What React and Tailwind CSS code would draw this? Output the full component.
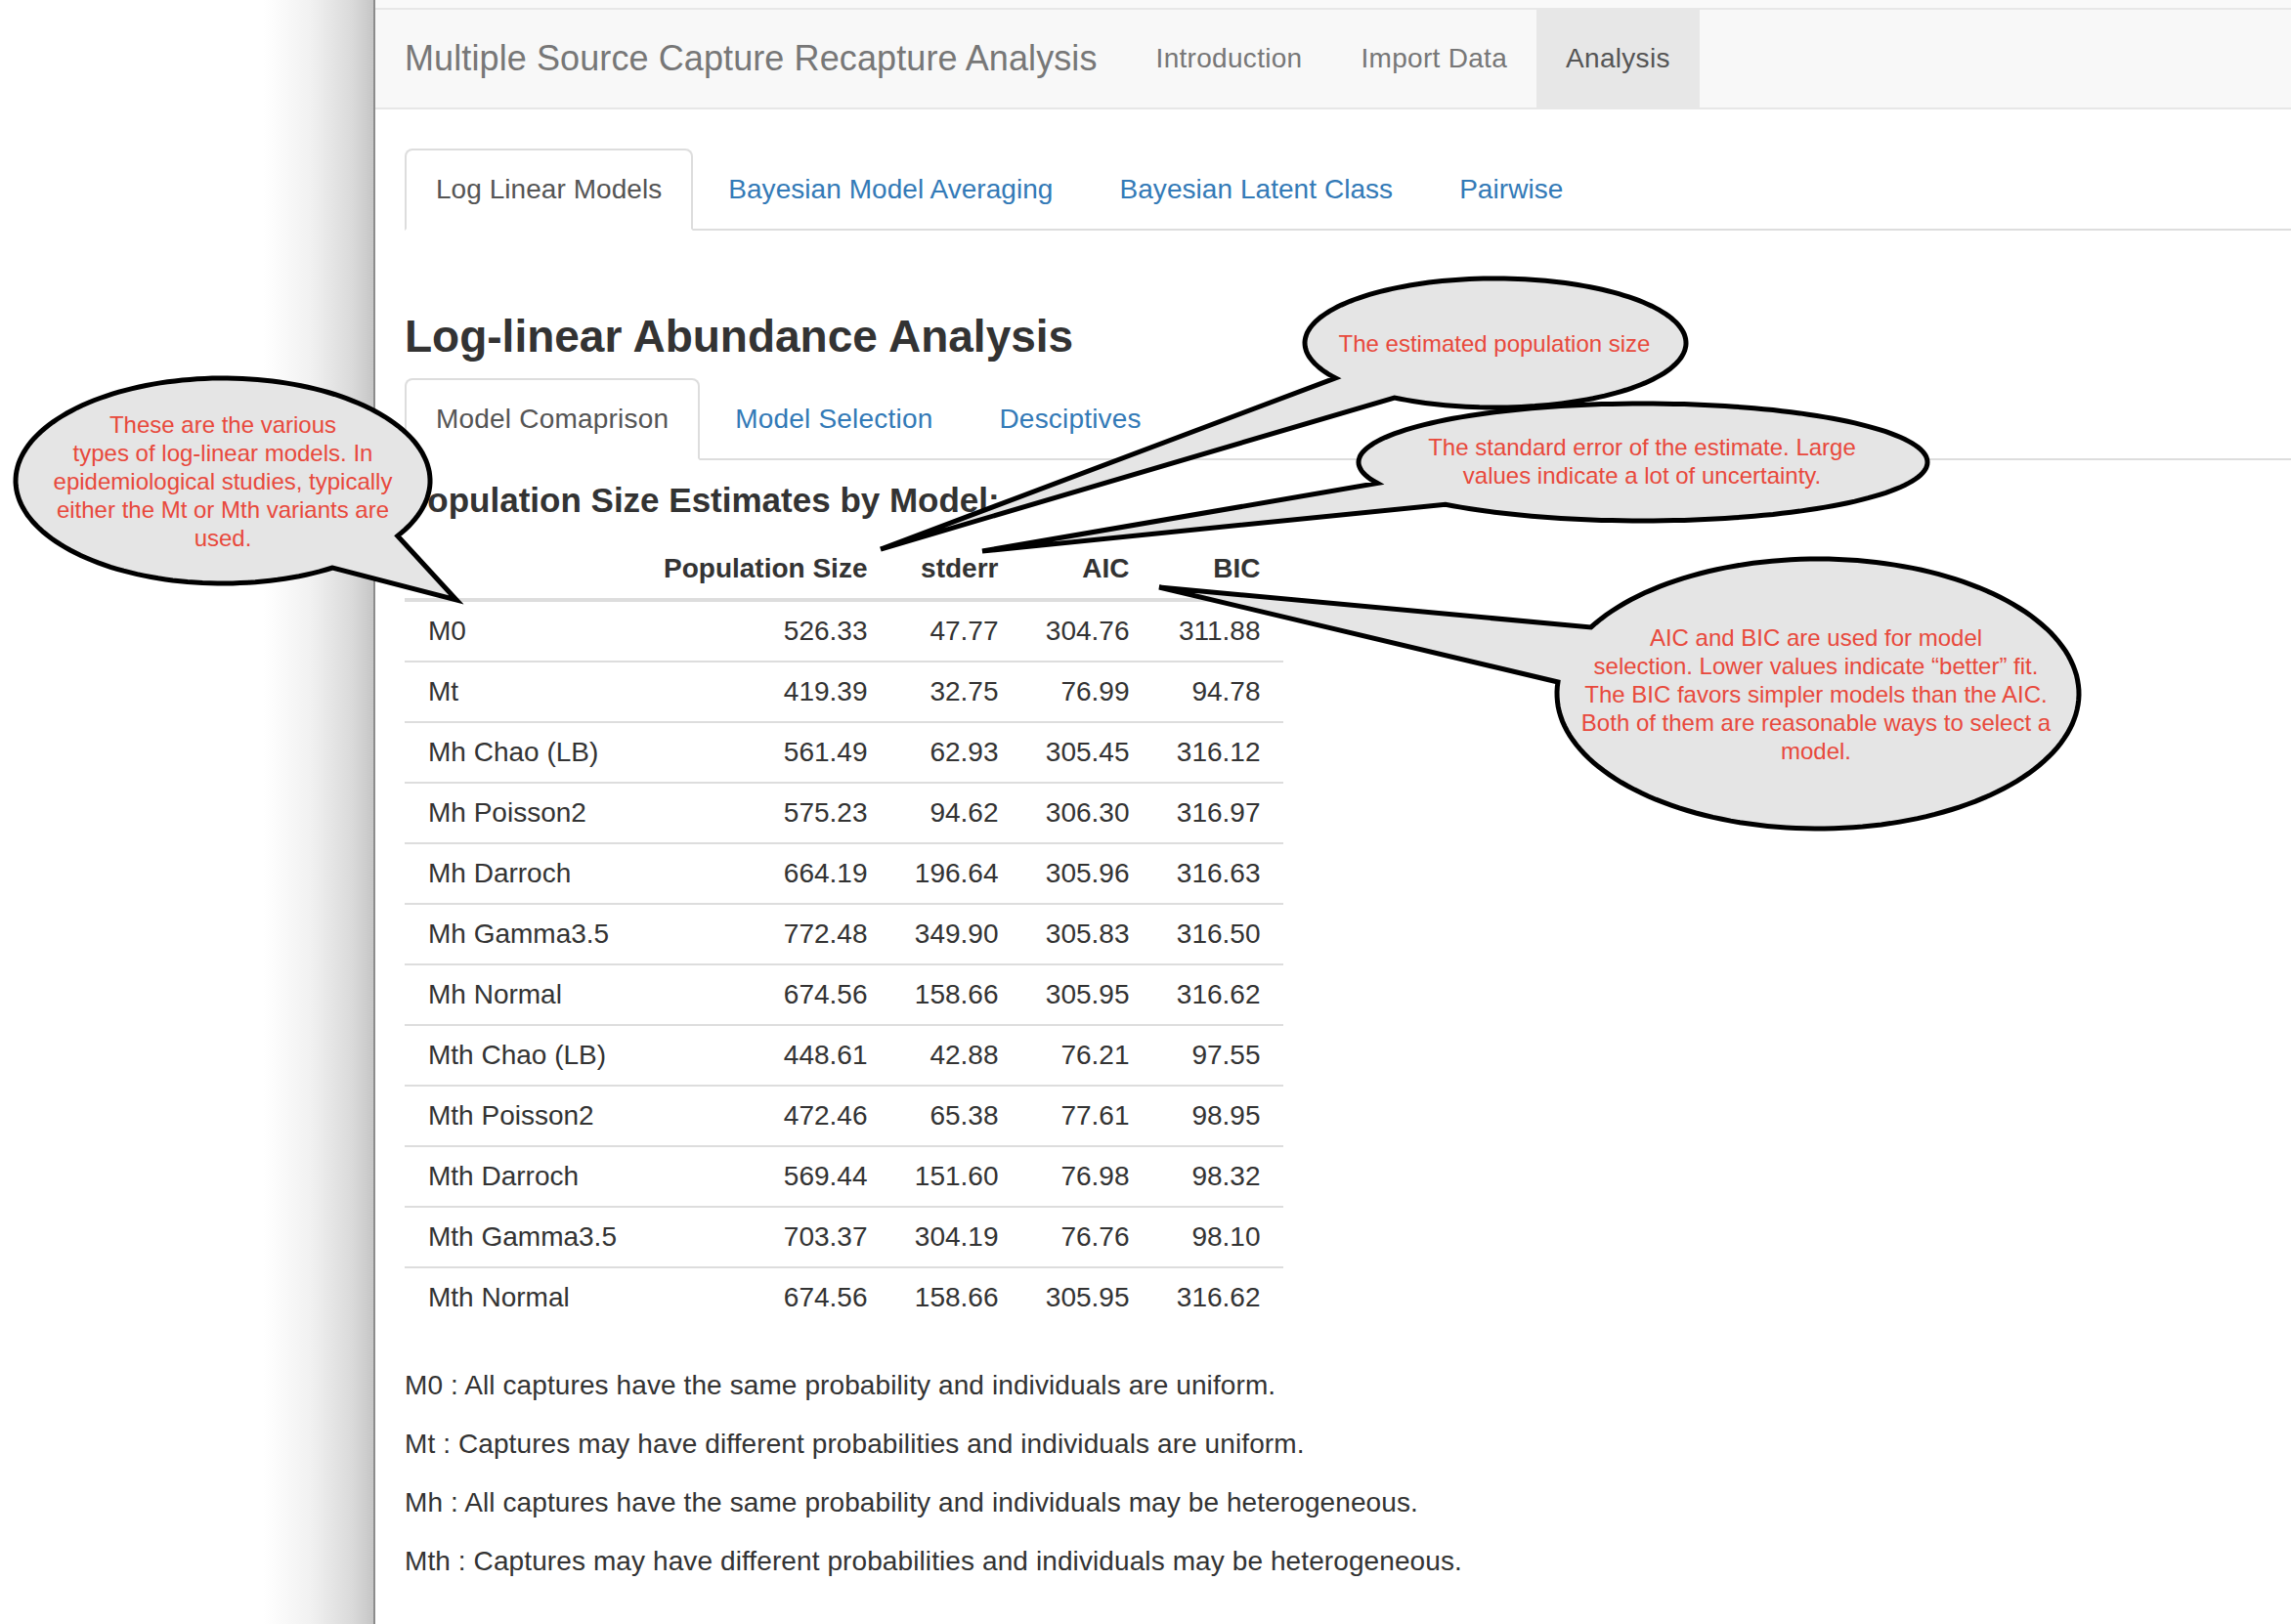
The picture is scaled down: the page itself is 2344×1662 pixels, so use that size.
import React from "react";

function bubblePath(cx, cy, rx, ry, a1, a2, tx, ty) {
  const s = Math.max(a1, a2);
  const e = Math.min(a1, a2) + 360;
  const pts = [];
  const n = 160;
  for (let i = 0; i <= n; i++) {
    const a = ((s + ((e - s) * i) / n) * Math.PI) / 180;
    pts.push(`${(cx + rx * Math.cos(a)).toFixed(1)},${(cy + ry * Math.sin(a)).toFixed(1)}`);
  }
  return `M${pts.join(" L")} L${tx},${ty} Z`;
}

const rows = [
  ["M0", "526.33", "47.77", "304.76", "311.88"],
  ["Mt", "419.39", "32.75", "76.99", "94.78"],
  ["Mh Chao (LB)", "561.49", "62.93", "305.45", "316.12"],
  ["Mh Poisson2", "575.23", "94.62", "306.30", "316.97"],
  ["Mh Darroch", "664.19", "196.64", "305.96", "316.63"],
  ["Mh Gamma3.5", "772.48", "349.90", "305.83", "316.50"],
  ["Mh Normal", "674.56", "158.66", "305.95", "316.62"],
  ["Mth Chao (LB)", "448.61", "42.88", "76.21", "97.55"],
  ["Mth Poisson2", "472.46", "65.38", "77.61", "98.95"],
  ["Mth Darroch", "569.44", "151.60", "76.98", "98.32"],
  ["Mth Gamma3.5", "703.37", "304.19", "76.76", "98.10"],
  ["Mth Normal", "674.56", "158.66", "305.95", "316.62"],
];

const notes = [
  "M0 : All captures have the same probability and individuals are uniform.",
  "Mt : Captures may have different probabilities and individuals are uniform.",
  "Mh : All captures have the same probability and individuals may be heterogeneous.",
  "Mth : Captures may have different probabilities and individuals may be heterogeneous.",
];

function Tabs({ items, wide }) {
  const track = wide ? "tracking-[0.2px]" : "tracking-[0.05px]";
  return (
    <ul className="flex border-b-2 border-[#dddddd]">
      {items.map((t, i) => (
        <li key={t} className="-mb-[2px]">
          <span
            className={
              (i === 0
                ? "block mr-[4px] px-[30px] py-[20px] leading-[40px] text-[28px] border-2 rounded-t-[8px] border-[#dddddd] border-b-transparent bg-white text-[#555555] "
                : "block mr-[4px] px-[30px] py-[20px] leading-[40px] text-[28px] border-2 rounded-t-[8px] border-transparent text-[#337ab7] ") +
              track
            }
          >
            {t}
          </span>
        </li>
      ))}
    </ul>
  );
}

export default function App() {
  return (
    <div className="relative w-[2344px] h-[1662px] overflow-hidden bg-white font-['Liberation_Sans',Arial,sans-serif] text-[#333333]">
      <div className="flex h-full">
        <div className="w-[382px] shrink-0 bg-[linear-gradient(to_right,#ffffff_0px,#ffffff_270px,#f1f1f1_318px,#dadada_360px,#c6c6c6_382px)]" />
        <div className="w-[2px] shrink-0 bg-[#8c8c8c]" />
        <div className="flex-1 min-w-0">
          <div className="h-[8px] bg-[#f9f9f9]" />
          <nav className="flex h-[104px] bg-[#f8f8f8] border-y-2 border-[#e7e7e7] pl-[30px]">
            <div className="pr-[30px] py-[30px] text-[36px] tracking-[0.1px] leading-[40px] text-[#777777] whitespace-nowrap">
              Multiple Source Capture Recapture Analysis
            </div>
            <div className="px-[30px] py-[30px] text-[28px] tracking-[0.3px] leading-[40px] text-[#777777]">Introduction</div>
            <div className="px-[30px] py-[30px] text-[28px] tracking-[0.3px] leading-[40px] text-[#777777]">Import Data</div>
            <div className="px-[30px] py-[30px] text-[28px] tracking-[0.3px] leading-[40px] text-[#555555] bg-[#e7e7e7]">Analysis</div>
          </nav>
          <div className="pl-[30px]">
            <div className="mt-[40px]">
              <Tabs items={["Log Linear Models", "Bayesian Model Averaging", "Bayesian Latent Class", "Pairwise"]} />
            </div>
            <h3 className="mt-[82px] text-[46px] leading-[52px] font-bold text-[#333333]">
              Log-linear Abundance Analysis
            </h3>
            <div className="mt-[17px]">
              <Tabs wide items={["Model Comaprison", "Model Selection", "Desciptives"]} />
            </div>
            <h4 className="mt-[21px] text-[35px] leading-[40px] font-bold text-[#333333]">
              Population Size Estimates by Model:
            </h4>
            <table className="mt-[20px] mb-[40px] border-separate border-spacing-0 text-[28px] leading-[40px]">
              <thead>
                <tr>
                  <th className="w-[241px] px-[24px] py-[10px] border-b-4 border-[#dddddd] text-left font-bold"></th>
                  <th className="w-[256px] px-[24px] py-[10px] border-b-4 border-[#dddddd] text-right font-bold whitespace-nowrap">Population Size</th>
                  <th className="w-[134px] px-[24px] py-[10px] border-b-4 border-[#dddddd] text-right font-bold">stderr</th>
                  <th className="w-[134px] px-[24px] py-[10px] border-b-4 border-[#dddddd] text-right font-bold">AIC</th>
                  <th className="w-[134px] px-[24px] py-[10px] border-b-4 border-[#dddddd] text-right font-bold">BIC</th>
                </tr>
              </thead>
              <tbody>
                {rows.map((r, i) => (
                  <tr key={r[0]}>
                    {r.map((c, j) => (
                      <td
                        key={j}
                        className={
                          (i === 0 ? "" : "border-t-2 border-[#dddddd] ") +
                          (j === 0 ? "text-left whitespace-nowrap " : "text-right ") +
                          "px-[24px] py-[10px]"
                        }
                      >
                        {c}
                      </td>
                    ))}
                  </tr>
                ))}
              </tbody>
            </table>
            {notes.map((n) => (
              <p key={n} className="mb-[20px] text-[28px] tracking-[0.1px] leading-[40px] whitespace-nowrap">
                {n}
              </p>
            ))}
          </div>
        </div>
      </div>

      <svg className="absolute top-0 left-0 pointer-events-none" width="2344" height="1662" viewBox="0 0 2344 1662">
        <g fill="#e5e5e5" stroke="#000000" strokeWidth="5" strokeLinejoin="miter" strokeMiterlimit="6">
          <path d={bubblePath(228, 492, 212, 105, 32.5, 58, 467, 614)} />
          <path d={bubblePath(1530, 351, 195, 66, 147, 122, 901, 562)} />
          <path d={bubblePath(1681, 473, 291, 60, 159, 134, 1005, 564)} />
          <path d={bubblePath(1860, 710, 267, 138, 209.5, 185, 1186, 601)} />
        </g>
      </svg>

      <div className="absolute left-[28px] top-[420px] w-[400px] text-center text-[24px] leading-[29px] text-[#e8493c] whitespace-nowrap">
        These are the various
        <br />
        types of log-linear models. In
        <br />
        epidemiological studies, typically
        <br />
        either the Mt or Mth variants are
        <br />
        used.
      </div>
      <div className="absolute left-[1329px] top-[337px] w-[400px] text-center text-[24px] leading-[29px] text-[#e8493c] whitespace-nowrap">
        The estimated population size
      </div>
      <div className="absolute left-[1380px] top-[443px] w-[600px] text-center text-[24px] leading-[29px] text-[#e8493c] whitespace-nowrap">
        The standard error of the estimate. Large
        <br />
        values indicate a lot of uncertainty.
      </div>
      <div className="absolute left-[1558px] top-[638px] w-[600px] text-center text-[24px] leading-[29px] text-[#e8493c] whitespace-nowrap">
        AIC and BIC are used for model
        <br />
        selection. Lower values indicate “better” fit.
        <br />
        The BIC favors simpler models than the AIC.
        <br />
        Both of them are reasonable ways to select a
        <br />
        model.
      </div>
    </div>
  );
}
